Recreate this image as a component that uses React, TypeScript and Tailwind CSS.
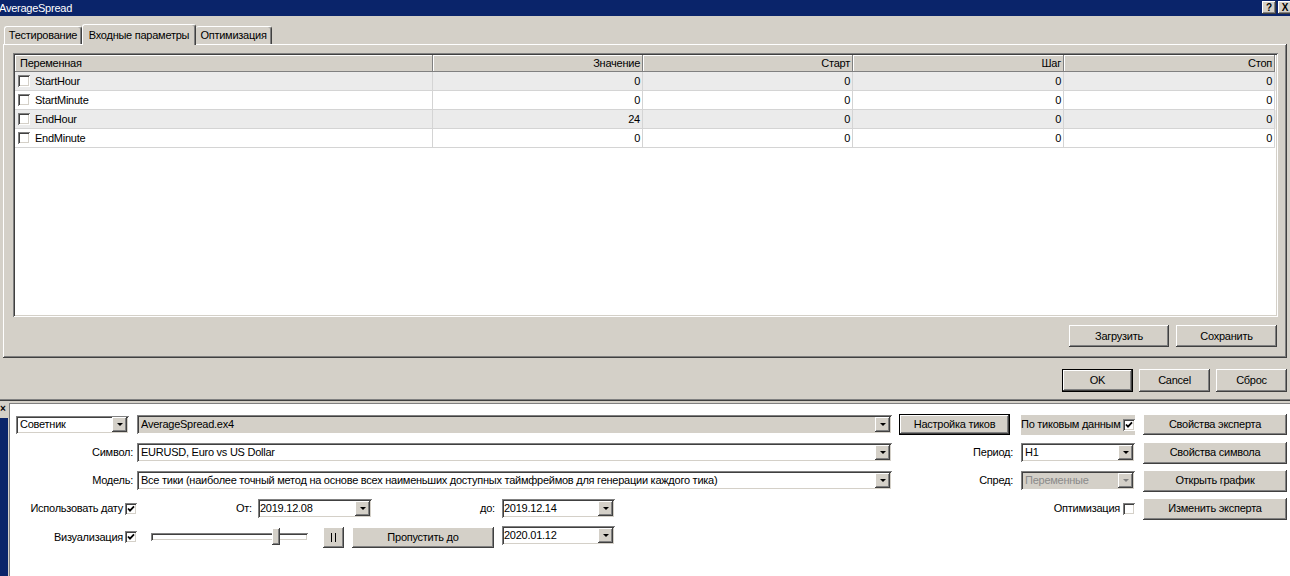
import React from "react";

const RAISED =
  "bg-[#d4d0c8] shadow-[inset_-1px_-1px_0_#404040,inset_1px_1px_0_#ffffff,inset_-2px_-2px_0_#808080,inset_2px_2px_0_#d4d0c8]";
const SUNKEN =
  "shadow-[inset_1px_1px_0_#808080,inset_-1px_-1px_0_#ffffff,inset_2px_2px_0_#404040,inset_-2px_-2px_0_#d4d0c8]";

type Kids = { children?: React.ReactNode; className?: string };

function Btn({ children, className = "", def = false }: Kids & { def?: boolean }) {
  return (
    <div
      className={`${RAISED} flex items-center justify-center shrink-0 whitespace-nowrap ${
        def ? "border border-black" : ""
      } ${className}`}
    >
      {children}
    </div>
  );
}

function TitleBtn({ children }: Kids) {
  return (
    <div className={`${RAISED} w-[14px] h-[13px] flex items-center justify-center font-bold text-[10px] leading-none`}>
      {children}
    </div>
  );
}

function Arrow({ disabled = false }: { disabled?: boolean }) {
  return (
    <div className={`${RAISED} w-[15px] h-[15px] flex items-center justify-center shrink-0`}>
      <div
        className={`w-0 h-0 border-l-[3px] border-r-[3px] border-t-[3px] border-l-transparent border-r-transparent ${
          disabled ? "border-t-[#808080]" : "border-t-black"
        }`}
      />
    </div>
  );
}

function Combo({
  text,
  className = "",
  disabled = false,
  tight = false,
}: {
  text: string;
  className?: string;
  disabled?: boolean;
  tight?: boolean;
}) {
  return (
    <div
      className={`flex items-center shrink-0 pr-[2px] ${tight ? "pl-[2px]" : "pl-[4px]"} ${SUNKEN} ${className}`}
    >
      <span className={`flex-1 whitespace-nowrap overflow-hidden ${disabled ? "text-[#8a8a8a]" : ""}`}>{text}</span>
      <Arrow disabled={disabled} />
    </div>
  );
}

function Check({ checked = false, className = "" }: { checked?: boolean; className?: string }) {
  return (
    <div className={`w-[12px] h-[12px] bg-white ${SUNKEN} flex items-center justify-center shrink-0 ${className}`}>
      {checked && (
        <svg width="8" height="8" viewBox="0 0 8 8">
          <path d="M1 3.5 L3 5.6 L7 1.4" stroke="black" strokeWidth="1.8" fill="none" />
        </svg>
      )}
    </div>
  );
}

const COLS = [
  { name: "Переменная", w: "w-[418px]" },
  { name: "Значение", w: "w-[210px]" },
  { name: "Старт", w: "w-[210px]" },
  { name: "Шаг", w: "w-[211px]" },
  { name: "Стоп", w: "w-[211px]" },
];

const ROWS = [
  ["StartHour", "0", "0", "0", "0"],
  ["StartMinute", "0", "0", "0", "0"],
  ["EndHour", "24", "0", "0", "0"],
  ["EndMinute", "0", "0", "0", "0"],
];

export default function App() {
  return (
    <div className="w-[1290px] h-[576px] overflow-hidden bg-[#d4d0c8] text-[11px] leading-[13px] tracking-[-0.25px] text-black font-['Liberation_Sans',Arial,sans-serif] flex flex-col">
      {/* Title bar */}
      <div className="h-[16px] shrink-0 bg-[#0a246a] flex items-center">
        <span className="text-white ml-[-1px]">AverageSpread</span>
        <div className="ml-auto mr-[-2px] flex gap-[2px] self-start mt-[1px]">
          <TitleBtn>?</TitleBtn>
          <TitleBtn>X</TitleBtn>
        </div>
      </div>

      {/* Tabs */}
      <div className="pt-[8px] h-[28px] shrink-0 flex items-end pl-[4px]">
        <div className="w-[78px] h-[18px] flex items-center justify-center border-t border-l border-white border-r border-r-[#404040] rounded-t-[3px] shadow-[inset_-1px_0_0_#808080]">
          Тестирование
        </div>
        <div className="relative z-10 mb-[-1px] w-[114px] h-[21px] bg-[#d4d0c8] flex items-start pt-[4px] justify-center border-t border-l border-white border-r border-r-[#404040] rounded-t-[3px] shadow-[inset_-1px_0_0_#808080]">
          Входные параметры
        </div>
        <div className="w-[76px] h-[18px] flex items-center justify-center border-t border-white border-r border-r-[#404040] rounded-t-[3px] shadow-[inset_-1px_0_0_#808080]">
          Оптимизация
        </div>
      </div>

      {/* Tab panel */}
      <div className={`mx-[3px] h-[314px] shrink-0 ${RAISED} flex flex-col`}>
        <div className={`ml-[10px] mt-[9px] w-[1265px] h-[264px] bg-white ${SUNKEN} p-[2px] overflow-hidden`}>
          <div className="flex h-[17px]">
            {COLS.map((c, i) => (
              <div
                key={c.name}
                className={`${c.w} h-[17px] shrink-0 flex items-center bg-[#d4d0c8] border-r border-b border-[#808080] shadow-[inset_1px_1px_0_#ffffff] ${
                  i === 0 ? "pl-[5px]" : "justify-end pr-[2px]"
                }`}
              >
                {c.name}
              </div>
            ))}
          </div>
          {ROWS.map((r, ri) => (
            <div key={r[0]} className={`flex h-[19px] ${ri % 2 === 0 ? "bg-[#ebebeb]" : "bg-white"}`}>
              {r.map((v, i) => (
                <div
                  key={i}
                  className={`${COLS[i].w} h-[19px] shrink-0 flex items-center border-r border-b border-[#d4d4d4] ${
                    i === 0 ? "pl-[3px]" : "justify-end pr-[2px]"
                  }`}
                >
                  {i === 0 ? (
                    <>
                      <Check />
                      <span className="ml-[5px]">{v}</span>
                    </>
                  ) : (
                    v
                  )}
                </div>
              ))}
            </div>
          ))}
        </div>
        <div className="mt-[8px] flex justify-end gap-[7px] pr-[10px]">
          <Btn className="w-[100px] h-[22px]">Загрузить</Btn>
          <Btn className="w-[101px] h-[22px]">Сохранить</Btn>
        </div>
      </div>

      {/* Dialog buttons */}
      <div className="mt-[11px] flex justify-end gap-[6px] pr-[3px] shrink-0">
        <Btn def className="w-[71px] h-[23px]">
          OK
        </Btn>
        <Btn className="w-[71px] h-[23px]">Cancel</Btn>
        <Btn className="w-[71px] h-[23px]">Сброс</Btn>
      </div>
      <div className="mt-[7px] h-[2px] shrink-0 bg-[#404040] border-t border-[#808080]" />

      {/* Tester panel */}
      <div className="flex flex-1 min-h-0">
        <div className="w-[9px] flex flex-col shrink-0">
          <div className="h-[17px] text-[10px] leading-[10px] font-bold pt-[3px]">×</div>
          <div className="w-[8px] flex-1 bg-[#0a246a]" />
        </div>
        <div className="flex-1 mt-[2px] bg-white border-t border-l border-[#808080] pt-[10px] flex flex-col gap-[7px]">
          {/* Row 1 */}
          <div className="flex items-center h-[21px]">
            <Combo className="ml-[6px] w-[113px] h-[18px] bg-white" text="Советник" />
            <Combo className="ml-[8px] w-[755px] h-[19px] bg-[#d4d0c8]" text="AverageSpread.ex4" />
            <Btn def className="ml-[7px] w-[111px] h-[21px]">
              Настройка тиков
            </Btn>
            <div className="ml-[11px] w-[114px] h-[20px] bg-[#d4d0c8] flex items-center justify-between whitespace-nowrap">
              <span>По тиковым данным</span>
              <Check checked />
            </div>
            <Btn className="ml-[8px] w-[144px] h-[21px]">Свойства эксперта</Btn>
          </div>

          {/* Row 2 */}
          <div className="flex items-center h-[21px]">
            <div className="w-[123px] text-right shrink-0">Символ:</div>
            <Combo className="ml-[4px] w-[755px] h-[19px] bg-white" text="EURUSD, Euro vs US Dollar" />
            <div className="w-[121px] text-right shrink-0">Период:</div>
            <Combo className="ml-[8px] w-[114px] h-[19px] bg-white" text="H1" />
            <Btn className="ml-[8px] w-[144px] h-[22px]">Свойства символа</Btn>
          </div>

          {/* Row 3 */}
          <div className="flex items-center h-[21px]">
            <div className="w-[123px] text-right shrink-0">Модель:</div>
            <Combo
              className="ml-[4px] w-[755px] h-[19px] bg-white"
              text="Все тики (наиболее точный метод на основе всех наименьших доступных таймфреймов для генерации каждого тика)"
            />
            <div className="w-[121px] text-right shrink-0">Спред:</div>
            <Combo className="ml-[8px] w-[114px] h-[19px] bg-[#d4d0c8]" text="Переменные" disabled />
            <Btn className="ml-[8px] w-[144px] h-[22px]">Открыть график</Btn>
          </div>

          {/* Row 4 */}
          <div className="flex items-center h-[21px] pr-[3px]">
            <div className="w-[113px] text-right shrink-0">Использовать дату</div>
            <Check checked className="ml-[2px]" />
            <div className="ml-[99px] w-[17px] shrink-0">От:</div>
            <Combo tight className="ml-[5px] w-[114px] h-[19px] bg-white" text="2019.12.08" />
            <div className="ml-[108px] w-[14px] shrink-0">до:</div>
            <Combo tight className="ml-[8px] w-[113px] h-[19px] bg-white" text="2019.12.14" />
            <div className="ml-auto flex items-center">
              <span>Оптимизация</span>
              <Check className="ml-[3px]" />
              <Btn className="ml-[8px] w-[144px] h-[22px]">Изменить эксперта</Btn>
            </div>
          </div>

          {/* Row 5 */}
          <div className="flex items-center h-[22px]">
            <div className="w-[113px] text-right shrink-0">Визуализация</div>
            <Check checked className="ml-[2px]" />
            <div className={`relative ml-[14px] w-[157px] h-[8px] bg-white ${SUNKEN} shrink-0`}>
              <div className={`absolute left-[121px] top-[-5px] w-[8px] h-[17px] ${RAISED}`} />
            </div>
            <Btn className="ml-[15px] w-[21px] h-[21px] gap-[3px]">
              <div className="w-[1px] h-[9px] bg-black" />
              <div className="w-[1px] h-[9px] bg-black" />
            </Btn>
            <Btn className="ml-[8px] w-[142px] h-[21px]">Пропустить до</Btn>
            <Combo tight className="ml-[8px] w-[113px] h-[19px] bg-white self-start" text="2020.01.12" />
          </div>
        </div>
      </div>
    </div>
  );
}
